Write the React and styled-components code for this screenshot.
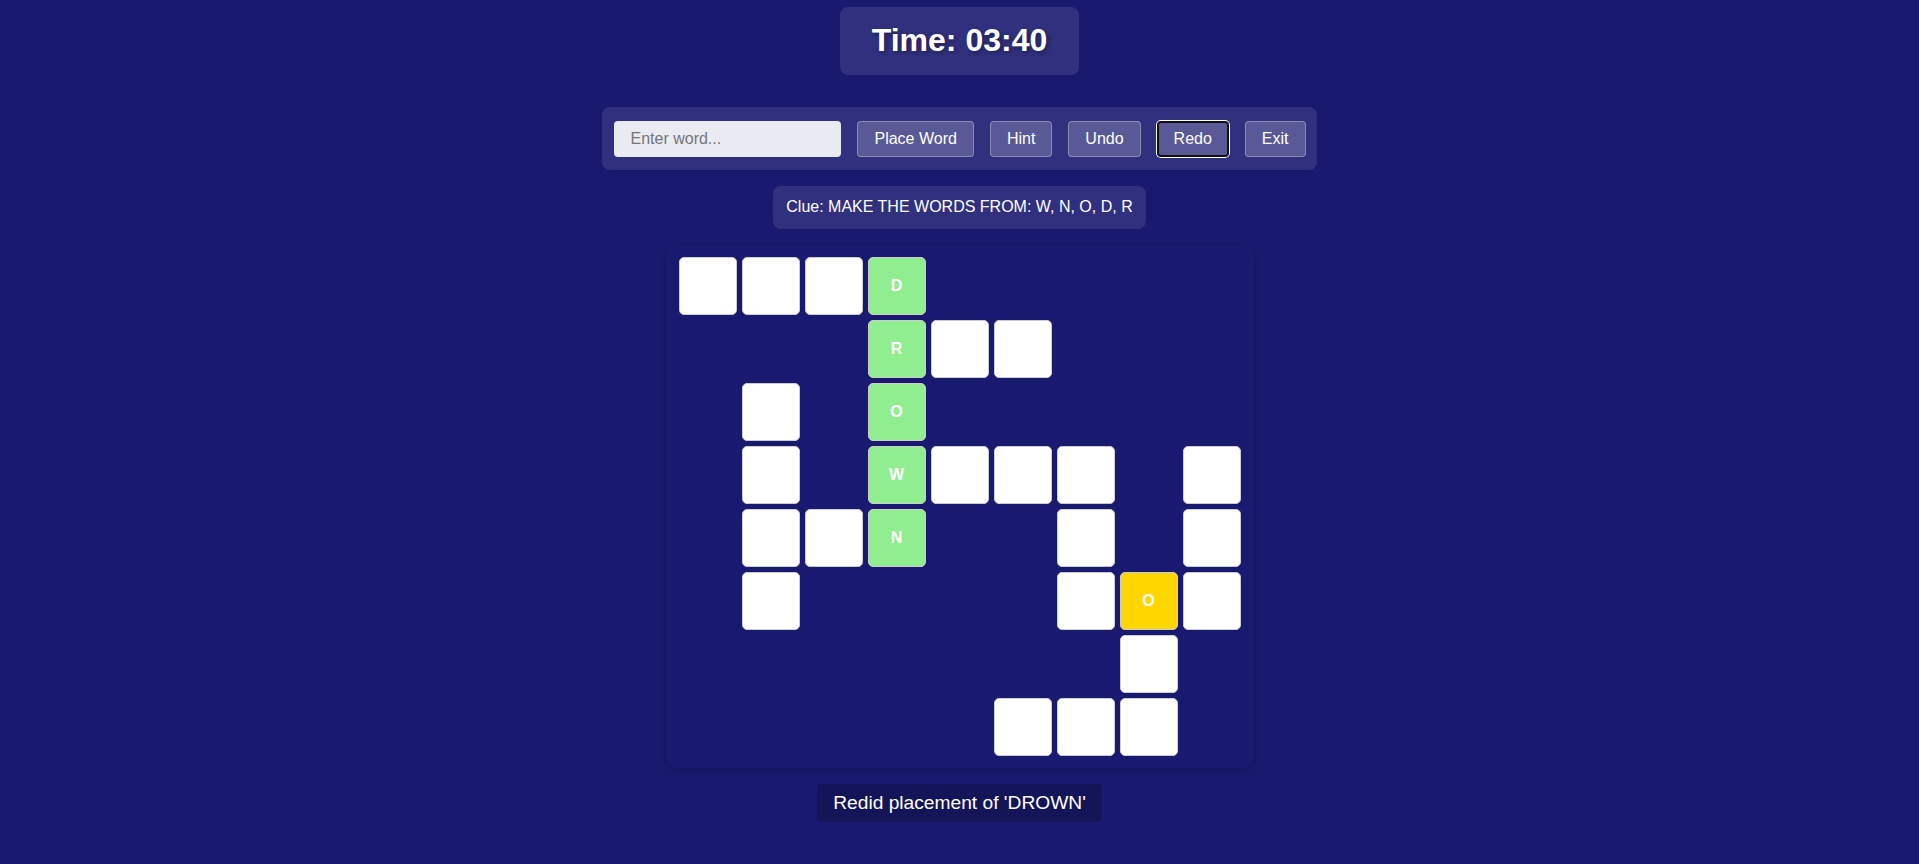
import React from 'react';
import styled, { createGlobalStyle } from 'styled-components';

const GlobalStyle = createGlobalStyle`
  body {
    margin: 0;
    background: #191970;
    font-family: "Liberation Sans", Arial, sans-serif;
    color: #fff;
  }
`;

// '.' empty, '#' blank tile, letters are placed; lowercase = highlighted hint
const layout = [
  '###D.....',
  '...R##...',
  '.#.O.....',
  '.#.W###.#',
  '.##N..#.#',
  '.#....#o#',
  '.......#.',
  '.....###.',
];

const App = () => {
  return (
    <Page>
      <GlobalStyle />
      <Timer>Time: 03:40</Timer>
      <Toolbar>
        <WordInput placeholder="Enter word..." />
        <Button>Place Word</Button>
        <Button>Hint</Button>
        <Button>Undo</Button>
        <Button focused>Redo</Button>
        <Button>Exit</Button>
      </Toolbar>
      <Clue>Clue: MAKE THE WORDS FROM: W, N, O, D, R</Clue>
      <Board>
        {layout.map((row, r) =>
          row.split('').map((ch, c) => {
            if (ch === '.') return <Empty key={`${r}-${c}`} />;
            if (ch === '#') return <Cell key={`${r}-${c}`} />;
            const hint = ch === ch.toLowerCase();
            return (
              <Cell key={`${r}-${c}`} variant={hint ? 'hint' : 'placed'}>
                {ch.toUpperCase()}
              </Cell>
            );
          })
        )}
      </Board>
      <Status>Redid placement of 'DROWN'</Status>
    </Page>
  );
};

export default App;

const Page = styled.div`
  display: flex;
  flex-direction: column;
  align-items: center;
  gap: 16px;
  padding-top: 7px;
  min-height: 857px;
  box-sizing: border-box;
`;

const Timer = styled.div`
  background: rgba(255, 255, 255, 0.1);
  border-radius: 8px;
  padding: 15px 32px 16px;
  font-size: 32px;
  font-weight: 700;
  text-shadow: 2px 2px 4px rgba(0, 0, 0, 0.35);
  margin-bottom: 16px;
`;

const Toolbar = styled.div`
  display: flex;
  align-items: center;
  gap: 16px;
  padding: 14px 11px 13px 12px;
  background: rgba(255, 255, 255, 0.1);
  border-radius: 8px;
`;

const WordInput = styled.input`
  width: 227px;
  height: 36px;
  box-sizing: border-box;
  padding: 8px 16px;
  border: none;
  border-radius: 4px;
  background: rgba(255, 255, 255, 0.9);
  font-family: inherit;
  font-size: 16px;
  color: #333;

  &::placeholder {
    color: #777;
  }
`;

const Button = styled.button`
  height: 36px;
  padding: 0 16px;
  font-family: inherit;
  font-size: 16px;
  color: #fff;
  background: rgba(255, 255, 255, 0.2);
  border: 1px solid ${(p) => (p.focused ? '#101010' : 'rgba(255, 255, 255, 0.3)')};
  box-shadow: ${(p) =>
    p.focused ? 'inset 0 0 0 1px #101010, 0 0 0 1px #fff' : 'none'};
  border-radius: 4px;
  cursor: pointer;
`;

const Clue = styled.div`
  background: rgba(255, 255, 255, 0.1);
  border-radius: 8px;
  padding: 12px 13px 13px;
  font-size: 16px;
`;

const Board = styled.div`
  display: grid;
  grid-template-columns: repeat(9, 58px);
  grid-auto-rows: 58px;
  gap: 5px;
  padding: 12px;
  border-radius: 8px;
  box-shadow: 0 2px 10px rgba(0, 0, 0, 0.18);
`;

const Empty = styled.div``;

const cellColors = {
  placed: '#90ee90',
  hint: '#ffd700',
  blank: '#fff',
};

const Cell = styled.div`
  box-sizing: border-box;
  border: 1px solid #ccc;
  border-radius: 5px;
  background: ${(p) => cellColors[p.variant || 'blank']};
  display: flex;
  align-items: center;
  justify-content: center;
  font-size: 16px;
  font-weight: 700;
  color: #fff;
`;

const Status = styled.div`
  background: rgba(0, 0, 0, 0.2);
  border-radius: 4px;
  padding: 8px 16px;
  font-size: 19.2px;
`;
